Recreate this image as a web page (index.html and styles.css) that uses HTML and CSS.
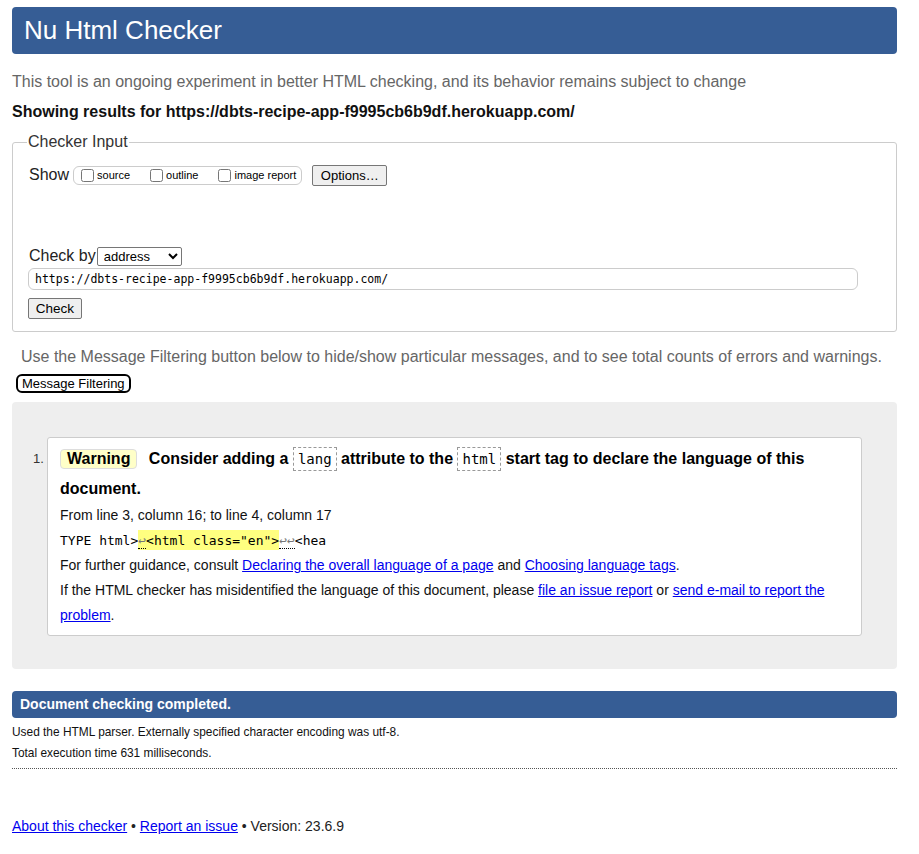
FILE: index.html
```html
<!DOCTYPE html>
<html lang="en">
<head>
<meta charset="utf-8">
<title>Nu Html Checker</title>
<link rel="stylesheet" href="styles.css">
</head>
<body>
<h1 class="title">Nu Html Checker</h1>
<p class="intro">This tool is an ongoing experiment in better HTML checking, and its behavior remains subject to change</p>
<p class="showing">Showing results for https://dbts-recipe-app-f9995cb6b9df.herokuapp.com/</p>

<fieldset class="checker">
  <legend>Checker Input</legend>
  <div class="show-row">
    <span class="show-label">Show</span>
    <span class="show-group">
      <label><input type="checkbox"> source</label>
      <label><input type="checkbox"> outline</label>
      <label><input type="checkbox"> image report</label>
    </span>
    <button class="btn">Options…</button>
  </div>
  <div class="checkby-row">
    <span class="checkby-label">Check by</span>
    <select class="sel"><option>address</option></select>
  </div>
  <div class="url">https://dbts-recipe-app-f9995cb6b9df.herokuapp.com/</div>
  <button class="btn check">Check</button>
</fieldset>

<p class="filter-note">Use the Message Filtering button below to hide/show particular messages, and to see total counts of errors and warnings.</p>
<button class="filter-btn">Message Filtering</button>

<div class="results">
  <ol class="messages">
    <li class="msg">
      <p class="msg-head"><strong class="badge">Warning</strong> <span>Consider adding a <code>lang</code> attribute to the <code>html</code> start tag to declare the language of this document.</span></p>
      <p class="loc">From line 3, column 16; to line 4, column 17</p>
      <p class="extract"><span>TYPE html&gt;</span><mark><span class="lf">↩</span>&lt;html class="en"&gt;</mark><span class="lf">↩↩</span>&lt;hea</p>
      <p class="note">For further guidance, consult <a href="#">Declaring the overall language of a page</a> and <a href="#">Choosing language tags</a>.</p>
      <p class="note">If the HTML checker has misidentified the language of this document, please <a href="#">file an issue report</a> or <a href="#">send e-mail to report the problem</a>.</p>
    </li>
  </ol>
</div>

<h2 class="done">Document checking completed.</h2>
<p class="details">Used the HTML parser. Externally specified character encoding was utf-8.</p>
<p class="details">Total execution time 631 milliseconds.</p>
<hr class="sep">

<p class="footer"><a href="#">About this checker</a> • <a href="#">Report an issue</a> • Version: 23.6.9</p>
</body>
</html>
```

FILE: styles.css
```css
html, body {
  margin: 0;
  padding: 0;
  background: #fff;
}
body {
  font-family: "Liberation Sans", Arial, sans-serif;
  color: #000;
  padding: 7px 22px 0 12px;
}
p { margin: 0; }

.title {
  margin: 0;
  background: #365d95;
  color: #fff;
  font-weight: normal;
  font-size: 26px;
  line-height: 47px;
  height: 47px;
  padding: 0 12px;
  border-radius: 4px;
}

.intro {
  color: #666;
  font-size: 16px;
  line-height: 20px;
  margin-top: 18px;
}
.showing {
  font-weight: bold;
  font-size: 16px;
  line-height: 20px;
  margin-top: 10px;
  color: #111;
}

.checker {
  margin: 11px 0 0 0;
  padding: 13px 16px 12px 16px;
  border: 1px solid #ccc;
  border-radius: 3px;
  min-width: 0;
}
.checker legend {
  font-size: 16px;
  color: #333;
  padding: 0 1px;
  margin-left: -2px;
}
.show-row {
  display: flex;
  align-items: center;
  height: 22px;
}
.show-label {
  font-size: 16px;
  color: #222;
  margin-right: 4px;
}
.show-group {
  display: inline-flex;
  align-items: center;
  border: 1px solid #ccc;
  border-radius: 6px;
  height: 17px;
  padding: 0 5px 0 4px;
  gap: 17px;
  font-size: 11px;
}
.show-group label {
  display: inline-flex;
  align-items: center;
  white-space: nowrap;
}
.show-group input {
  margin: 0 3px 0 3px;
  width: 13px;
  height: 13px;
}
.btn {
  font-family: "Liberation Sans", Arial, sans-serif;
  font-size: 13px;
  background: #efefef;
  border: 1px solid #767676;
  border-radius: 2px;
  color: #000;
  padding: 0 6px;
  height: 21px;
}
.show-row .btn {
  margin-left: 10px;
  width: 75px;
}
.checkby-row {
  display: flex;
  align-items: center;
  margin-top: 60px;
  height: 20px;
}
.checkby-label {
  font-size: 16px;
  color: #222;
  margin-right: 1px;
}
.sel {
  font-family: "Liberation Sans", Arial, sans-serif;
  font-size: 13px;
  width: 85px;
  height: 19px;
  border: 1px solid #767676;
  border-radius: 2px;
  background: #fff;
  color: #000;
  padding: 0 0 0 2px;
}
.url {
  margin-top: 2px;
  height: 20px;
  line-height: 20px;
  width: 822px;
  border: 1px solid #ccc;
  border-radius: 6px;
  font-family: "DejaVu Sans Mono", monospace;
  font-size: 11.5px;
  padding: 0 0 0 6px;
  box-sizing: content-box;
  color: #000;
  margin-left: -1px;
}
.btn.check {
  margin-top: 8px;
  margin-left: -1px;
  width: 54px;
  font-size: 13.5px;
}

.filter-note {
  color: #666;
  font-size: 16px;
  line-height: 20px;
  margin: 15px 0 0 9px;
}
.filter-btn {
  margin: 7px 0 0 4px;
  font-family: "Liberation Sans", Arial, sans-serif;
  font-size: 13px;
  background: #fff;
  border: 2px solid #000;
  border-radius: 6px;
  padding: 0 4px;
  height: 19px;
  line-height: 15px;
  color: #000;
}

.results {
  margin-top: 9px;
  background: #eee;
  border-radius: 4px;
  padding: 35px 35px 33px 21px;
}
.messages {
  margin: 0;
  padding: 0 0 0 14px;
  list-style: none;
}
.msg {
  background: #fff;
  border: 1px solid #ccc;
  border-radius: 3px;
  padding: 6px 12px 7px 12px;
  position: relative;
}
.msg::before {
  content: "1.";
  position: absolute;
  left: -15px;
  top: 13px;
  font-size: 13px;
  color: #333;
}
.msg-head {
  font-weight: bold;
  font-size: 16px;
  line-height: 29px;
  color: #000;
}
.badge {
  display: inline-block;
  background: #ffffc8;
  border: 1px solid #ddd;
  border-radius: 4px;
  padding: 0 6px;
  line-height: 18px;
  margin-right: 7px;
}
.msg-head code {
  font-family: "DejaVu Sans Mono", monospace;
  font-weight: normal;
  font-size: 14px;
  border: 1px dashed #999;
  padding: 3px 4px;
}
.loc {
  font-size: 14px;
  line-height: 25px;
  color: #111;
}
.extract {
  font-family: "DejaVu Sans Mono", monospace;
  font-size: 13px;
  line-height: 25px;
  color: #000;
  white-space: pre;
}
.extract mark {
  background: #ffff80;
  color: #000;
  padding: 3px 0 2px;
}
.extract .lf {
  color: #777;
  border-bottom: 1px dotted #000;
}
.note {
  font-size: 14px;
  line-height: 25px;
  color: #111;
}
a {
  color: #0000ee;
}

.done {
  margin: 22px 0 0 0;
  background: #365d95;
  color: #fff;
  font-size: 14px;
  font-weight: bold;
  line-height: 27px;
  height: 27px;
  padding: 0 8px;
  border-radius: 4px;
}
.details {
  font-size: 11.9px;
  line-height: 21px;
  color: #111;
  margin-top: 4px;
}
.details + .details { margin-top: 0; }
.sep {
  margin: 4px 0 0 0;
  border: 0;
  border-top: 1px dotted #555;
}
.footer {
  margin-top: 48px;
  font-size: 14px;
  line-height: 18px;
  color: #222;
}
```
